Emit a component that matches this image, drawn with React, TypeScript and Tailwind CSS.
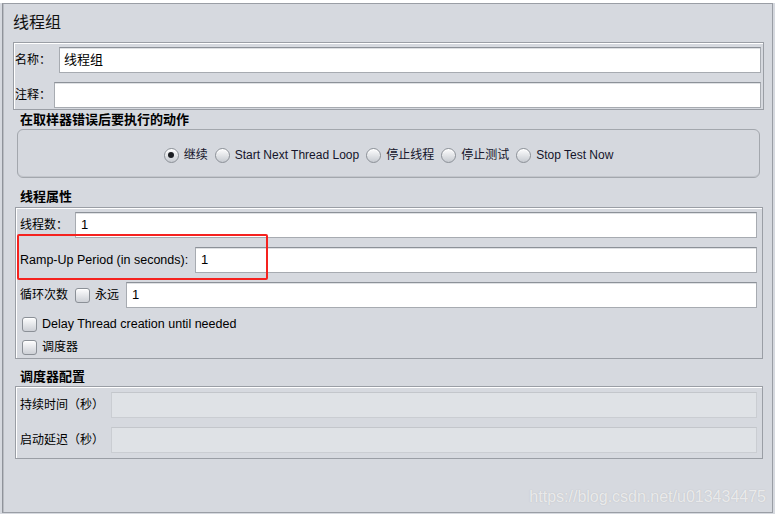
import React from 'react';

const FONT = "font-['Liberation_Sans','Noto_Sans_CJK_SC',sans-serif]";

function Radio({ checked }: { checked?: boolean }) {
  return (
    <span className="inline-flex h-[15px] w-[15px] shrink-0 items-center justify-center rounded-full border border-[#8b9097] bg-linear-to-b from-[#fdfdfe] to-[#c7cbd1] shadow-[inset_0_1px_0_#fff]">
      {checked && <span className="h-[6px] w-[6px] rounded-full bg-[#1b1d22]" />}
    </span>
  );
}

function Checkbox() {
  return (
    <span className="inline-block h-[15px] w-[15px] shrink-0 rounded-[3px] border border-[#8b9097] bg-linear-to-b from-[#fdfdfe] to-[#cdd0d6] shadow-[inset_0_1px_0_#fff]" />
  );
}

function Field({ value, pl = 'pl-[5px]', className = '' }: { value?: string; pl?: string; className?: string }) {
  return (
    <div
      className={`flex h-[26px] items-center border border-[#a7abb1] border-t-[#8c9198] bg-white shadow-[inset_0_1px_0_#dfe1e4] text-[13px] text-black ${pl} ${className}`}
    >
      {value}
    </div>
  );
}

function DisabledField({ className = '' }: { className?: string }) {
  return (
    <div className={`h-[26px] border border-[#cacdd2] border-t-[#c3c6cb] bg-[#dfe2e6] ${className}`} />
  );
}

function Heading({ children, className = '' }: { children: React.ReactNode; className?: string }) {
  return <div className={`h-[16px] pl-[7px] text-[13px] leading-[16px] font-bold text-black ${className}`}>{children}</div>;
}

export default function App() {
  return (
    <div className={`h-[514px] w-[775px] bg-[#d6d9df] ${FONT}`}>
      <div className="relative ml-[2px] mt-[3px] h-[510px] w-[771px] border border-[#9a9ea5] border-l-[#8f939a] shadow-[inset_1px_0_0_#b9bcc2]">
        <div className="flex flex-col pl-[10px] pr-[8px]">
          <div className="mt-[9px] h-[20px] text-[16px] leading-[20px] text-[#111]">线程组</div>

          {/* name + comment */}
          <div className="mt-[9px] flex h-[68px] flex-col gap-[9px] border border-[#9a9ea5] pl-[1px] pr-[2px] pt-[4px] shadow-[inset_1px_1px_0_#fff]">
            <div className="flex items-center">
              <span className="w-[44px] text-[12px] text-black">名称：</span>
              <Field value="线程组" pl="pl-[4px]" className="flex-1 text-[12px]" />
            </div>
            <div className="flex items-center">
              <span className="w-[39px] text-[12px] text-black">注释：</span>
              <Field className="flex-1" />
            </div>
          </div>

          <Heading className="mt-[2px]">在取样器错误后要执行的动作</Heading>
          <div className="mx-[4px] mt-[1px] flex h-[49px] items-center justify-center gap-[5px] rounded-[6px] border border-[#a3a7ad] bg-[#d5d8de] pt-[3px] text-[#14142a] shadow-[inset_0_-1px_0_#c3c6cc]">
            <Radio checked />
            <span className="mr-[2px] text-[12px]">继续</span>
            <Radio />
            <span className="mr-[2px] text-[12px]">Start Next Thread Loop</span>
            <Radio />
            <span className="mr-[2px] text-[12px]">停止线程</span>
            <Radio />
            <span className="mr-[2px] text-[12px]">停止测试</span>
            <Radio />
            <span className="text-[12px]">Stop Test Now</span>
          </div>

          <Heading className="mt-[11px]">线程属性</Heading>
          <div className="ml-[2px] mr-[1px] mt-[2px] flex h-[152px] flex-col border border-[#9a9ea5] pl-[4px] pr-[5px] pt-[4px] shadow-[inset_1px_1px_0_#fff]">
            <div className="flex items-center">
              <span className="w-[55px] text-[12px] text-black">线程数：</span>
              <Field value="1" className="flex-1" />
            </div>
            <div className="mt-[9px] flex items-center">
              <span className="w-[175px] text-[12.5px] text-black">Ramp-Up Period (in seconds):</span>
              <Field value="1" className="flex-1" />
            </div>
            <div className="mt-[9px] flex items-center">
              <span className="w-[55px] text-[12px] text-black">循环次数</span>
              <Checkbox />
              <span className="ml-[5px] w-[31px] text-[12px] text-black">永远</span>
              <Field value="1" className="flex-1" />
            </div>
            <div className="mt-[8px] flex h-[16px] items-center gap-[5px] pl-[2px]">
              <Checkbox />
              <span className="text-[12.5px] text-black">Delay Thread creation until needed</span>
            </div>
            <div className="mt-[7px] flex h-[16px] items-center gap-[5px] pl-[2px]">
              <Checkbox />
              <span className="text-[12px] text-black">调度器</span>
            </div>
          </div>

          <Heading className="mt-[10px]">调度器配置</Heading>
          <div className="ml-[2px] mr-[1px] mt-[1px] flex h-[73px] flex-col gap-[9px] border border-[#9a9ea5] pl-[4px] pr-[5px] pt-[5px] shadow-[inset_1px_1px_0_#fff]">
            <div className="flex items-center">
              <span className="w-[91px] text-[12px] text-black">持续时间（秒）</span>
              <DisabledField className="flex-1" />
            </div>
            <div className="flex items-center">
              <span className="w-[91px] text-[12px] text-black">启动延迟（秒）</span>
              <DisabledField className="flex-1" />
            </div>
          </div>
        </div>

        {/* red annotation box */}
        <div className="absolute left-[14px] top-[230px] h-[46px] w-[251px] rounded-[2px] border-[2.5px] border-[#f5221f]" />

        {/* watermark */}
        <div className="absolute right-[6px] top-[481px] text-[16px] text-white/70 [text-shadow:0_0_1px_rgba(150,150,150,0.5)]">
          https://blog.csdn.net/u013434475
        </div>
      </div>
    </div>
  );
}
